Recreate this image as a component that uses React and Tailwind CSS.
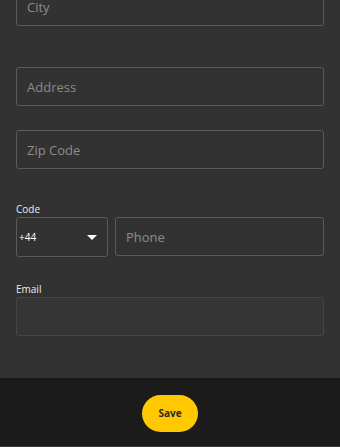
import React, { useState } from "react";

const font = { fontFamily: '"Open Sans", "Noto Sans", sans-serif' };

const TextField = ({ placeholder, className = "" }) => (
  <input
    type="text"
    placeholder={placeholder}
    className={`block h-[39px] w-full rounded-[3px] border border-[#5b5b5b] bg-transparent px-[10px] text-[13px] text-white placeholder:text-[#8c8c8c] outline-none ${className}`}
  />
);

const App = () => {
  const [code, setCode] = useState("+44");

  return (
    <div className="flex h-[447px] w-[340px] flex-col overflow-hidden bg-[#323232]" style={font}>
      <div className="flex flex-1 flex-col px-4">
        <TextField placeholder="City" className="mt-[-13px]" />
        <TextField placeholder="Address" className="mt-[41px]" />
        <TextField placeholder="Zip Code" className="mt-[24px]" />

        <div className="mt-[34px] flex gap-[7px]">
          <div className="w-[92px]">
            <label className="block text-[10px] leading-[13px] text-[#ececec]">Code</label>
            <div className="relative mt-[1px] h-[40px] rounded-[3px] border border-[#5b5b5b]">
              <select
                value={code}
                onChange={(e) => setCode(e.target.value)}
                className="h-full w-full appearance-none bg-transparent pl-[2px] text-[10px] text-white outline-none"
              >
                <option value="+44">+44</option>
                <option value="+1">+1</option>
              </select>
              <span className="pointer-events-none absolute right-[10px] top-[17px] h-0 w-0 border-x-[5px] border-t-[5px] border-x-transparent border-t-white" />
            </div>
          </div>
          <div className="flex-1 pt-[14px]">
            <TextField placeholder="Phone" />
          </div>
        </div>

        <label className="mt-[26px] block text-[10px] leading-[13px] text-[#ececec]">Email</label>
        <input
          type="email"
          className="mt-[1px] block h-[39px] w-full rounded-[2px] border border-[#454545] bg-[#353535] outline-none"
        />
      </div>

      <div className="flex h-[69px] items-start justify-center border-b border-[#3a3a3a] bg-[#1b1b1b] pt-[17px]">
        <button
          type="button"
          className="h-[37px] w-[56px] rounded-full bg-[#ffc800] text-[10px] font-bold text-[#2a2a2a]"
        >
          Save
        </button>
      </div>
    </div>
  );
};

export default App;
